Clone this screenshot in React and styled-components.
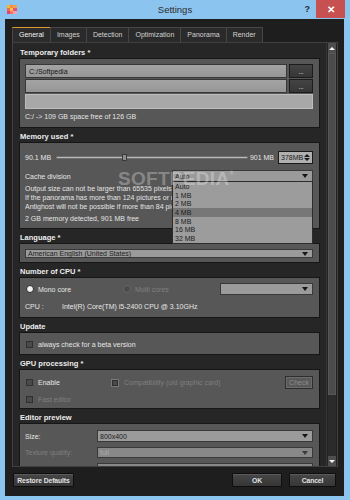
import React from 'react'
import styled, { createGlobalStyle } from 'styled-components'

const GlobalStyle = createGlobalStyle`
  html, body { margin: 0; padding: 0; }
  body {
    width: 350px;
    height: 500px;
    overflow: hidden;
    font-family: "Liberation Sans", Arial, sans-serif;
  }
  * { box-sizing: border-box; }
`

const Window = styled.div`
  position: relative;
  width: 350px;
  height: 500px;
  background: #8cc4f0;
  display: flex;
  flex-direction: column;
`

const TitleBar = styled.div`
  flex: none;
  height: 19px;
  display: grid;
  grid-template-columns: 1fr auto 1fr;
  align-items: center;
`

const AppIcon = styled.svg`
  margin-left: 7px;
`

const Title = styled.div`
  font-size: 9.5px;
  color: #2b2b2b;
`

const Controls = styled.div`
  display: flex;
  justify-content: flex-end;
  align-items: flex-start;
  align-self: start;
  gap: 6px;
  margin-right: 5px;
`

const Help = styled.span`
  font-size: 9px;
  font-weight: bold;
  color: #1c2b36;
  line-height: 18px;
`

const Close = styled.div`
  width: 29px;
  height: 18px;
  background: #c75050;
  color: #fff;
  font-size: 10px;
  font-weight: bold;
  display: flex;
  align-items: center;
  justify-content: center;
`

const Body = styled.div`
  flex: 1;
  min-height: 0;
  margin: 0 6px 4px 5px;
  padding: 8px 6px 9px 7px;
  background: #1e1e1e;
  display: flex;
  flex-direction: column;
`

const TabBar = styled.div`
  flex: none;
  display: flex;
  height: 15px;
`

const Tab = styled.div`
  height: 15px;
  padding: 0 6px;
  margin-right: -1px;
  line-height: 13px;
  font-size: 7px;
  color: ${p => (p.$active ? '#f2f2f2' : '#d2d2d2')};
  background: ${p => (p.$active ? '#2c2c2c' : '#2a2a2a')};
  border: 1px solid #474747;
  border-top-color: ${p => (p.$active ? '#d99a2e' : '#474747')};
  border-bottom: none;
`

const Panel = styled.div`
  flex: 1;
  min-height: 0;
  display: flex;
  background: #262626;
  border: 1px solid #404040;
  overflow: hidden;
`

const Scroll = styled.div`
  flex: 1;
  min-width: 0;
  padding: 1px 6px 0;
  overflow: hidden;
`

const Heading = styled.div`
  padding: 4px 1px 1px;
  line-height: 9px;
  font-size: 7.5px;
  font-weight: bold;
  color: #ededed;
`

const Box = styled.div`
  background: #575757;
  border: 1px solid #161616;
  padding: ${p => p.$pad || '5px 6px 5px 5px'};
  display: flex;
  flex-direction: column;
`

const Row = styled.div`
  display: flex;
  align-items: center;
  justify-content: ${p => (p.$spread ? 'space-between' : 'flex-start')};
  height: ${p => p.$h || 12}px;
  margin-top: ${p => p.$mt || 0}px;
`

const Grid = styled.div`
  display: grid;
  grid-template-columns: ${p => p.$cols};
  align-items: center;
  height: ${p => p.$h || 12}px;
  margin-top: ${p => p.$mt || 0}px;
`

const Field = styled.div`
  flex: 1;
  height: ${p => p.$h || 14}px;
  display: flex;
  align-items: center;
  padding: 0 3px;
  font-size: 7px;
  color: #151515;
  background: ${p => (p.$light ? '#a8a8a8' : 'linear-gradient(#a4a4a4, #969696)')};
  border: 1px solid ${p => (p.$light ? '#bdbdbd' : '#383838')};
`

const DotsButton = styled.div`
  width: 24px;
  height: 14px;
  margin-left: 2px;
  background: linear-gradient(#444, #363636);
  border: 1px solid #1c1c1c;
  color: #dcdcdc;
  font-size: 7px;
  line-height: 13px;
  text-align: center;
  letter-spacing: -0.3px;
`

const Text = styled.span`
  font-size: 7px;
  color: ${p => (p.$off ? '#7f7f7f' : '#e6e6e6')};
  white-space: nowrap;
`

const Note = styled.div`
  font-size: 7px;
  line-height: ${p => p.$lh || 9}px;
  margin-top: ${p => p.$mt || 0}px;
  color: #e4e4e4;
  white-space: nowrap;
  overflow: hidden;
`

const Track = styled.div`
  position: relative;
  flex: 1;
  height: 3px;
  margin: 0 2px 0 5px;
  background: #bababa;
  border: 1px solid #6e6e6e;
`

const Knob = styled.div`
  position: absolute;
  top: -3px;
  width: 5px;
  height: 7px;
  background: #8c8c8c;
  border: 1px solid #3a3a3a;
`

const Spin = styled.div`
  width: 35px;
  height: 13px;
  margin-left: 4px;
  padding: 0 2px;
  display: flex;
  align-items: center;
  justify-content: space-between;
  background: #b0b0b0;
  border: 1px solid #1a1a1a;
  font-size: 7px;
  color: #1a1a1a;
`

const SpinArrows = styled.div`
  display: flex;
  flex-direction: column;
  gap: 1px;
`

const Tri = styled.span`
  width: 0;
  height: 0;
  border-left: 3px solid transparent;
  border-right: 3px solid transparent;
  ${p =>
    p.$up
      ? `border-bottom: 3px solid ${p.$color || '#1a1a1a'};`
      : `border-top: 3px solid ${p.$color || '#1a1a1a'};`}
`

const Select = styled.div`
  position: relative;
  width: ${p => (p.$w ? `${p.$w}px` : 'auto')};
  flex: ${p => (p.$w ? 'none' : 1)};
  height: ${p => p.$h || 12}px;
  display: flex;
  align-items: center;
  justify-content: space-between;
  padding: 0 4px 0 2px;
  background: ${p => (p.$off ? '#888888' : '#9b9b9b')};
  border: 1px solid #393939;
  color: ${p => (p.$off ? '#ababab' : '#1c1c1c')};
  font-size: 7px;
`

const Caret = styled.span`
  width: 0;
  height: 0;
  border-left: 3.5px solid transparent;
  border-right: 3.5px solid transparent;
  border-top: 4px solid ${p => (p.$off ? '#3c3c3c' : '#161616')};
`

const DropList = styled.div`
  position: absolute;
  top: 100%;
  left: -1px;
  right: -1px;
  z-index: 5;
  background: #9c9c9c;
  border: 1px solid #2c2c2c;
`

const Option = styled.div`
  height: 8.7px;
  line-height: 9px;
  padding-left: 2px;
  font-size: 7px;
  color: #1c1c1c;
  background: ${p => (p.$hl ? '#777777' : 'transparent')};
`

const Choice = styled.div`
  display: flex;
  align-items: center;
  gap: 4px;
  height: ${p => p.$h || 12}px;
  margin-top: ${p => p.$mt || 0}px;
  padding-left: ${p => p.$indent || 0}px;
`

const Radio = styled.span`
  flex: none;
  width: 8px;
  height: 8px;
  border-radius: 50%;
  background: ${p => (p.$on ? '#f2f2f2' : '#4b4b4b')};
  border: 1px solid ${p => (p.$on ? '#2a2a2a' : '#666')};
`

const Checkbox = styled.span`
  flex: none;
  width: ${p => (p.$ring ? 8 : 7)}px;
  height: ${p => (p.$ring ? 8 : 7)}px;
  margin-right: 1px;
  background: #4a4a4a;
  border: 1px solid ${p => (p.$ring ? '#7a7a7a' : '#303030')};
  box-shadow: ${p => (p.$ring ? 'inset 0 0 0 1px #2e2e2e' : 'none')};
`

const SmallButton = styled.div`
  width: 28px;
  height: 13px;
  justify-self: end;
  display: flex;
  align-items: center;
  justify-content: center;
  background: #595959;
  border: 1px solid #2e2e2e;
  box-shadow: inset 0 0 0 1px #6c6c6c;
  font-size: 7px;
  color: #8c8c8c;
`

const ScrollBar = styled.div`
  width: 11px;
  display: flex;
  flex-direction: column;
  padding: 0 1px;
  background: #222;
  border-left: 1px solid #363636;
`

const ArrowBtn = styled.div`
  height: 10px;
  display: flex;
  align-items: center;
  justify-content: center;
  background: #4e4e4e;
`

const Thumb = styled.div`
  height: 342px;
  background: #4b4b4b;
  border: 1px solid #575757;
`

const Rail = styled.div`
  flex: 1;
  background: #2b2b2b;
`

const Footer = styled.div`
  flex: none;
  display: flex;
  gap: 7px;
  height: 14px;
  margin-top: 6px;
  padding: 0 2px 0 1px;
`

const Spacer = styled.div`
  flex: 1;
`

const Button = styled.div`
  width: ${p => p.$w}px;
  height: 14px;
  display: flex;
  align-items: center;
  justify-content: center;
  white-space: nowrap;
  background: linear-gradient(#474747, #363636);
  border: 1px solid #0e0e0e;
  box-shadow: inset 0 1px 0 #5a5a5a;
  border-radius: 1px;
  font-size: 6.8px;
  font-weight: bold;
  letter-spacing: -0.1px;
  color: #e2e2e2;
`

const Watermark = styled.div`
  position: absolute;
  left: 118px;
  top: 168px;
  font-size: 19px;
  font-weight: bold;
  letter-spacing: 0.3px;
  color: rgba(255, 255, 255, 0.3);
  pointer-events: none;
  z-index: 10;

  & sup {
    font-size: 6px;
    vertical-align: 10px;
  }
`

const tabs = ['General', 'Images', 'Detection', 'Optimization', 'Panorama', 'Render']
const cacheSizes = ['Auto', '1 MB', '2 MB', '4 MB', '8 MB', '16 MB', '32 MB']

const Logo = () => (
  <AppIcon width="10" height="9" viewBox="0 0 10 9">
    <rect x="0" y="0" width="3" height="3" fill="#f7b733" />
    <rect x="3" y="0" width="3" height="3" fill="#f58b3c" />
    <rect x="6" y="0" width="4" height="3" fill="#f2a04a" />
    <rect x="0" y="3" width="3" height="3" fill="#ef6c4a" />
    <rect x="3" y="3" width="3" height="3" fill="#f5c34f" />
    <rect x="6" y="3" width="4" height="3" fill="#e9507a" />
    <rect x="0" y="6" width="3" height="3" fill="#e4417f" />
    <rect x="3" y="6" width="3" height="3" fill="#f07a5a" />
    <rect x="6" y="6" width="4" height="3" fill="#f3a3b5" />
  </AppIcon>
)

const App = () => {
  const memory = 0.34

  return (
    <Window>
      <GlobalStyle />
      <TitleBar>
        <Logo />
        <Title>Settings</Title>
        <Controls>
          <Help>?</Help>
          <Close>✕</Close>
        </Controls>
      </TitleBar>

      <Body>
        <TabBar>
          {tabs.map((t, i) => (
            <Tab key={t} $active={i === 0}>{t}</Tab>
          ))}
        </TabBar>

        <Panel>
          <Scroll>
            <Heading>Temporary folders *</Heading>
            <Box>
              <Row $h={14}>
                <Field>C:/Softpedia</Field>
                <DotsButton>...</DotsButton>
              </Row>
              <Row $h={14} $mt={1}>
                <Field />
                <DotsButton>...</DotsButton>
              </Row>
              <Row $h={15} $mt={1}>
                <Field $light $h={15} />
              </Row>
              <Note $lh={10} $mt={3}>C:/ -&gt; 109 GB space free of 126 GB</Note>
            </Box>

            <Heading>Memory used *</Heading>
            <Box $pad="7px 6px 5px 5px">
              <Row $h={14}>
                <Text>90.1 MB</Text>
                <Track>
                  <Knob style={{ left: `${memory * 100}%` }} />
                </Track>
                <Text>901 MB</Text>
                <Spin>
                  378MB
                  <SpinArrows>
                    <Tri $up />
                    <Tri />
                  </SpinArrows>
                </Spin>
              </Row>
              <Row $mt={6} $spread>
                <Text>Cache division</Text>
                <Select $w={141}>
                  Auto
                  <Caret />
                  <DropList>
                    {cacheSizes.map(s => (
                      <Option key={s} $hl={s === '4 MB'}>{s}</Option>
                    ))}
                  </DropList>
                </Select>
              </Row>
              <Note $mt={2}>Output size can not be larger than 65535 pixels.</Note>
              <Note>If the panorama has more than 124 pictures or more than 400 MPixels,</Note>
              <Note>Antighost will not be possible if more than 84 pictures.</Note>
              <Note $mt={3}>2 GB memory detected, 901 MB free</Note>
            </Box>

            <Heading>Language *</Heading>
            <Box $pad="5px 6px 4px 5px">
              <Select $h={13}>
                American English (United States)
                <Caret />
              </Select>
            </Box>

            <Heading>Number of CPU *</Heading>
            <Box>
              <Grid $cols="98px 1fr 93px">
                <Choice $indent={1}>
                  <Radio $on />
                  <Text>Mono core</Text>
                </Choice>
                <Choice>
                  <Radio />
                  <Text $off>Multi cores</Text>
                </Choice>
                <Select>
                  <span />
                  <Caret />
                </Select>
              </Grid>
              <Grid $cols="37px 1fr" $mt={5}>
                <Text>CPU :</Text>
                <Text>Intel(R) Core(TM) i5-2400 CPU @ 3.10GHz</Text>
              </Grid>
            </Box>

            <Heading>Update</Heading>
            <Box $pad="6px 6px 5px 5px">
              <Choice $indent={1} $h={10}>
                <Checkbox />
                <Text>always check for a beta version</Text>
              </Choice>
            </Box>

            <Heading>GPU processing *</Heading>
            <Box $pad="6px 6px 3px 5px">
              <Grid $cols="86px 1fr 28px" $h={13}>
                <Choice $indent={1}>
                  <Checkbox />
                  <Text>Enable</Text>
                </Choice>
                <Choice>
                  <Checkbox $ring />
                  <Text $off>Compatibility (old graphic card)</Text>
                </Choice>
                <SmallButton>Check</SmallButton>
              </Grid>
              <Choice $indent={1} $mt={4}>
                <Checkbox />
                <Text $off>Fast editor</Text>
              </Choice>
            </Box>

            <Heading>Editor preview</Heading>
            <Box $pad="6px 6px 5px 5px">
              <Grid $cols="72px 1fr">
                <Text>Size:</Text>
                <Select>
                  800x400
                  <Caret />
                </Select>
              </Grid>
              <Grid $cols="72px 1fr" $h={11} $mt={5}>
                <Text $off>Texture quality:</Text>
                <Select $off $h={11}>
                  full
                  <Caret $off />
                </Select>
              </Grid>
              <Grid $cols="72px 1fr" $mt={5}>
                <span />
                <Select $off>
                  <span />
                  <Caret $off />
                </Select>
              </Grid>
            </Box>
          </Scroll>

          <ScrollBar>
            <ArrowBtn>
              <Tri $up $color="#f4f4f4" />
            </ArrowBtn>
            <Thumb />
            <Rail />
            <ArrowBtn>
              <Tri $color="#f4f4f4" />
            </ArrowBtn>
          </ScrollBar>
        </Panel>

        <Footer>
          <Button $w={61}>Restore Defaults</Button>
          <Spacer />
          <Button $w={50}>OK</Button>
          <Button $w={47}>Cancel</Button>
        </Footer>
      </Body>

      <Watermark>
        SOFTPEDIA<sup>®</sup>
      </Watermark>
    </Window>
  )
}

export default App
